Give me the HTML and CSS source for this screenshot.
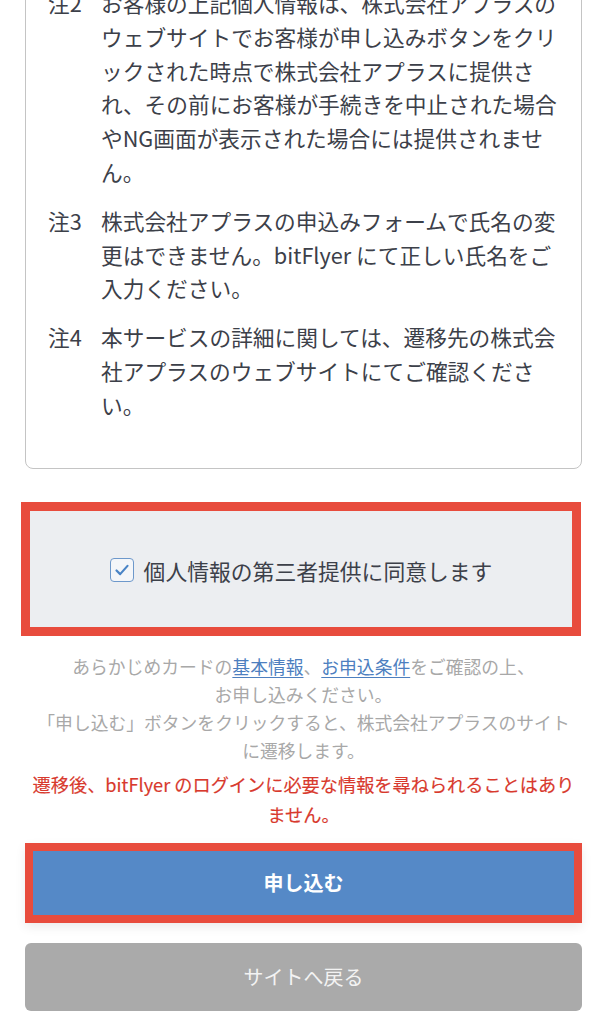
FILE: index.html
```html
<!DOCTYPE html>
<html lang="ja">
<head>
<meta charset="utf-8">
<link rel="stylesheet" href="styles.css">
</head>
<body>
<main class="page">
  <section class="notes">
    <div class="note">
      <span class="note-label">注2</span>
      <p class="note-text">お客様の上記個人情報は、株式会社アプラスのウェブサイトでお客様が申し込みボタンをクリックされた時点で株式会社アプラスに提供され、その前にお客様が手続きを中止された場合やNG画面が表示された場合には提供されません。</p>
    </div>
    <div class="note">
      <span class="note-label">注3</span>
      <p class="note-text">株式会社アプラスの申込みフォームで氏名の変更はできません。bitFlyer にて正しい氏名をご入力ください。</p>
    </div>
    <div class="note">
      <span class="note-label">注4</span>
      <p class="note-text">本サービスの詳細に関しては、遷移先の株式会社アプラスのウェブサイトにてご確認ください。</p>
    </div>
  </section>

  <section class="agree">
    <label class="agree-label">
      <span class="checkbox">
        <svg viewBox="0 0 24 24" width="24" height="24"><path d="M6 12.5 L10 16.5 L18 7.5" fill="none" stroke="#4a84c6" stroke-width="2.4" stroke-linecap="round" stroke-linejoin="round"/></svg>
      </span>
      <span>個人情報の第三者提供に同意します</span>
    </label>
  </section>

  <p class="info">あらかじめカードの<a href="#">基本情報</a>、<a href="#">お申込条件</a>をご確認の上、<br>お申し込みください。<br>「申し込む」ボタンをクリックすると、株式会社アプラスのサイトに遷移します。</p>
  <p class="warning">遷移後、bitFlyer のログインに必要な情報を尋ねられることはありません。</p>

  <div class="submit-wrap">
    <button class="btn btn-primary">申し込む</button>
  </div>
  <button class="btn btn-back">サイトへ戻る</button>
</main>
</body>
</html>
```

FILE: styles.css
```css
* { box-sizing: border-box; }
html, body { margin: 0; padding: 0; background: #ffffff; }
body {
  font-family: "Noto Sans CJK JP", "Noto Sans", sans-serif;
  color: #3c4049;
  overflow: hidden;
}
.page {
  width: 607px;
  padding: 0 25px 0 25px;
  display: flex;
  flex-direction: column;
}
.notes {
  margin-top: -35px;
  border: 1.5px solid #c4c4c4;
  border-radius: 8px;
  padding: 20px 18px 46px 22px;
  display: flex;
  flex-direction: column;
  gap: 15px;
}
.note {
  display: grid;
  grid-template-columns: 53px 1fr;
  font-size: 21.7px;
  line-height: 33.8px;
}
.note-text { margin: 0; }
.note-label { white-space: nowrap; }

.agree {
  margin: 33px 0 0 -4px;
  width: 560px;
  height: 134px;
  border: 9px solid #e84c3d;
  background: #eceef1;
  display: flex;
  align-items: center;
  justify-content: center;
}
.agree-label {
  display: flex;
  align-items: center;
  gap: 10px;
  font-size: 21.8px;
  color: #3c4049;
  padding-top: 3px;
}
.checkbox {
  width: 24px;
  height: 24px;
  border: 1.5px solid #6d98cb;
  border-radius: 4px;
  background: #f4f6f9;
  display: flex;
  align-items: center;
  justify-content: center;
}
.checkbox svg { display: block; width: 22px; height: 22px; }

.info {
  margin: 16px 0 0 0;
  padding: 0 12px;
  text-align: center;
  font-size: 17.8px;
  line-height: 28px;
  color: #a8a8a8;
}
.info a { color: #4d7fbf; text-decoration: underline; text-underline-offset: 3px; }
.warning {
  margin: 5px 0 0 0;
  text-align: center;
  font-size: 18.2px;
  line-height: 30px;
  color: #d8392d;
  font-weight: 400;
  -webkit-text-stroke: 0.15px #d8392d;
}
.submit-wrap {
  margin-top: 14px;
  border: 8px solid #e84c3d;
  box-shadow: 0 4px 10px rgba(0,0,0,0.08);
}
.btn {
  display: block;
  width: 100%;
  border: none;
  font-family: inherit;
  color: #ffffff;
  font-size: 20px;
  text-align: center;
}
.btn-primary {
  height: 64px;
  background: #5589c7;
  font-weight: 700;
}
.btn-back {
  margin-top: 20px;
  height: 68px;
  background: #aaaaaa;
  border-radius: 6px;
  color: #f3f3f3;
}
```
